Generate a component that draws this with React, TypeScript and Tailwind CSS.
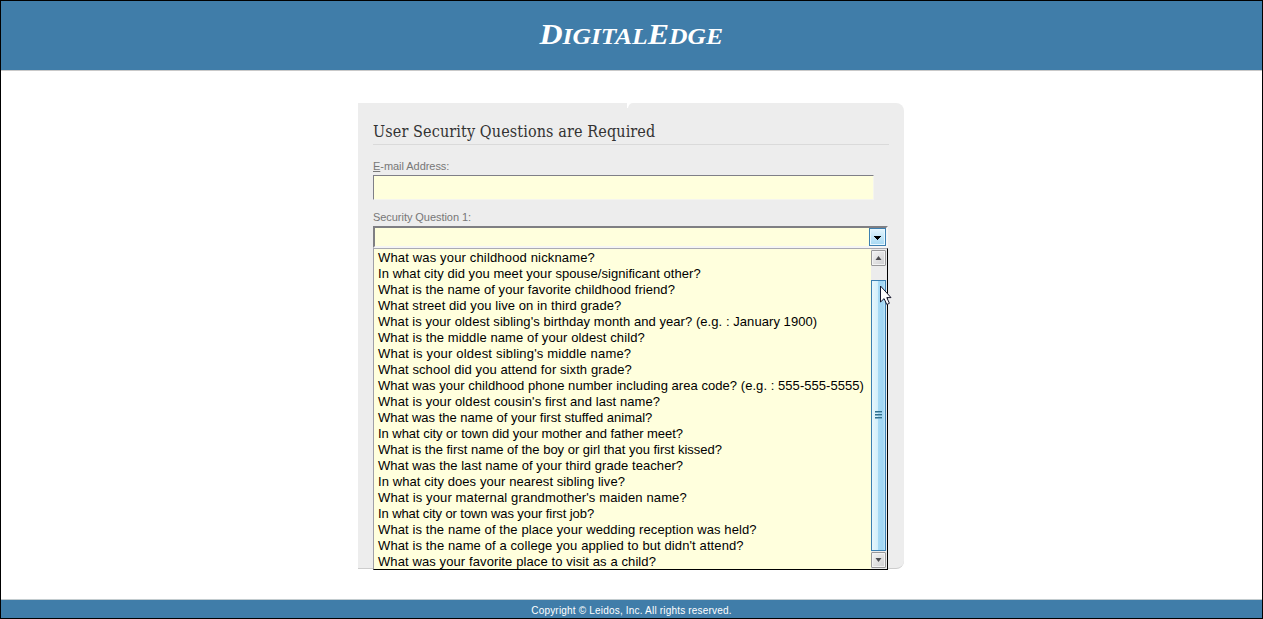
const questions: [string, string][] = [
  ["What was your childhood nickname?", "tracking-[0.16px]"],
  ["In what city did you meet your spouse/significant other?", "tracking-[0.06px]"],
  ["What is the name of your favorite childhood friend?", "tracking-[0.07px]"],
  ["What street did you live on in third grade?", "tracking-[0.08px]"],
  ["What is your oldest sibling's birthday month and year? (e.g. : January 1900)", "tracking-[0.06px]"],
  ["What is the middle name of your oldest child?", "tracking-[0.1px]"],
  ["What is your oldest sibling's middle name?", "tracking-[0.19px]"],
  ["What school did you attend for sixth grade?", "tracking-[0.09px]"],
  ["What was your childhood phone number including area code? (e.g. : 555-555-5555)", "tracking-[0.05px]"],
  ["What is your oldest cousin's first and last name?", "tracking-[0.09px]"],
  ["What was the name of your first stuffed animal?", "tracking-[0px]"],
  ["In what city or town did your mother and father meet?", "tracking-[-0.04px]"],
  ["What is the first name of the boy or girl that you first kissed?", "tracking-[-0.01px]"],
  ["What was the last name of your third grade teacher?", "tracking-[0.06px]"],
  ["In what city does your nearest sibling live?", "tracking-[0.08px]"],
  ["What is your maternal grandmother's maiden name?", "tracking-[0.135px]"],
  ["In what city or town was your first job?", "tracking-[-0.09px]"],
  ["What is the name of the place your wedding reception was held?", "tracking-[0.105px]"],
  ["What is the name of a college you applied to but didn't attend?", "tracking-[0.11px]"],
  ["What was your favorite place to visit as a child?", "tracking-[0.1px]"],
];

function ScrollButton({ up = false }: { up?: boolean }) {
  return (
    <div className="flex h-4 w-[15px] shrink-0 items-center justify-center rounded-[1px] border border-[#98989a] bg-linear-to-br from-[#f4f4f4] to-[#cfcfd1] shadow-[inset_0_0_0_1px_#f3f3f3]">
      <svg width="7" height="4" viewBox="0 0 7 4">
        <path d={up ? "M3.5 0L6.5 4H.5z" : "M.5 0h6L3.5 4z"} fill="#4c4c50" />
      </svg>
    </div>
  );
}

function ScrollBar() {
  return (
    <div className="relative flex h-80 w-4 flex-col items-start bg-[#ececec] pt-px">
      <ScrollButton up />
      <div className="mt-[14px] flex h-[271px] w-[15px] shrink-0 flex-col items-center justify-center gap-px border border-[#3c7fb1] bg-[linear-gradient(90deg,#e8f7fd_0px,#d2effb_6px,#a8dbf6_6px,#a0d5f3_11px,#c5e8f8_13px)] pb-[2px]">
        {[0, 1, 2].map((n) => (
          <div key={n} className="h-[2px] w-[7px] border-t border-[#31718f] bg-[#79aec9]" />
        ))}
      </div>
      <div className="mt-px">
        <ScrollButton />
      </div>
      <svg className="absolute top-[36px] left-[8px]" width="13" height="21" viewBox="0 0 13 21">
        <path d="M1.5 1v16l3.6-3.4L7.8 19.5l2.6-1.2-2.6-5.7H12z" fill="#fff" stroke="#15152b" strokeWidth="1" />
      </svg>
    </div>
  );
}

export default function App() {
  return (
    <div className="flex h-[619px] w-[1263px] flex-col overflow-hidden border border-black bg-white font-['Liberation_Sans',Arial,sans-serif]">
      <header className="flex h-[70px] shrink-0 justify-center border-b border-[#c9c9c9] bg-[#407da9] pt-[16px]">
        <h1 className="scale-x-[1.065] font-['Liberation_Serif',serif] text-[30px] leading-[34px] font-bold whitespace-nowrap text-white italic">
          D<span className="text-[24px]">IGITAL</span>E<span className="text-[24px]">DGE</span>
        </h1>
      </header>
      <main className="flex h-[528px] shrink-0 justify-center pt-8">
        <section className="relative mr-px h-[466px] w-[546px] rounded-r-lg border-b border-[#cdcdcd] bg-[#ededed] px-[15px] pt-[17px]">
          <svg className="absolute top-0 left-[269px]" width="6" height="5" viewBox="0 0 6 5">
            <path d="M0 0h6Q2 0 1 5H0z" fill="#fff" />
          </svg>
          <h2 className="h-[25px] w-[516px] border-b border-[#dadada] font-['DejaVu_Serif_Condensed','DejaVu_Serif',serif] text-[16px] leading-[24px] font-normal whitespace-nowrap text-[#333] [font-stretch:condensed]">
            <span className="tracking-[0.12px]">User Security Questions are Required</span>
          </h2>
          <label className="mt-[15px] block h-[15px] text-[11px] leading-[13px] tracking-[-0.05px] text-[#777]">
            <span className="underline underline-offset-1">E</span>-mail Address:
          </label>
          <div className="h-[25px] w-[501px] border border-t-[#7f7f87] border-r-[#f5f5ee] border-b-[#f5f5ee] border-l-[#7f7f87] bg-[#ffffdd]" />
          <label className="mt-[11px] block h-[15px] text-[11px] leading-[13px] tracking-[-0.05px] text-[#777]">Security Question 1:</label>
          <div className="flex h-[22px] w-[515px] justify-end border-2 border-t-[#7f7f83] border-r-[#f5f5f5] border-b-[#f5f5f5] border-l-[#7f7f83] bg-[#ffffdd]">
            <div className="flex h-[18px] w-[17px] items-center justify-center border border-[#3c7fb1] bg-linear-to-b from-[#e5f5fd] to-[#a5d8f3] pt-px shadow-[inset_0_0_0_1px_#e8f8ff]">
              <svg width="7" height="4" viewBox="0 0 7 4" shapeRendering="crispEdges">
                <path d="M0 0h7v1H6v1H5v1H4v1H3V3H2V2H1V1H0z" fill="#000" />
              </svg>
            </div>
          </div>
          <div className="relative flex h-[322px] w-[515px] justify-between border border-t-[#aaaab2] border-r-black border-b-black border-l-[#a0a0a8] bg-[#ffffdd]">
            <ul className="pt-px pl-1 text-[13px] leading-4 text-black">
              {questions.map(([text, tracking]) => (
                <li key={text} className="h-4 whitespace-nowrap">
                  <span className={tracking}>{text}</span>
                </li>
              ))}
            </ul>
            <ScrollBar />
          </div>
        </section>
      </main>
      <footer className="flex h-[19px] shrink-0 items-center justify-center border-t border-[#c3cccf] bg-[#407da9] pt-[3px] text-[10px] leading-3 text-white">
        <span className="tracking-[0.19px]">Copyright © Leidos, Inc. All rights reserved.</span>
      </footer>
    </div>
  );
}
